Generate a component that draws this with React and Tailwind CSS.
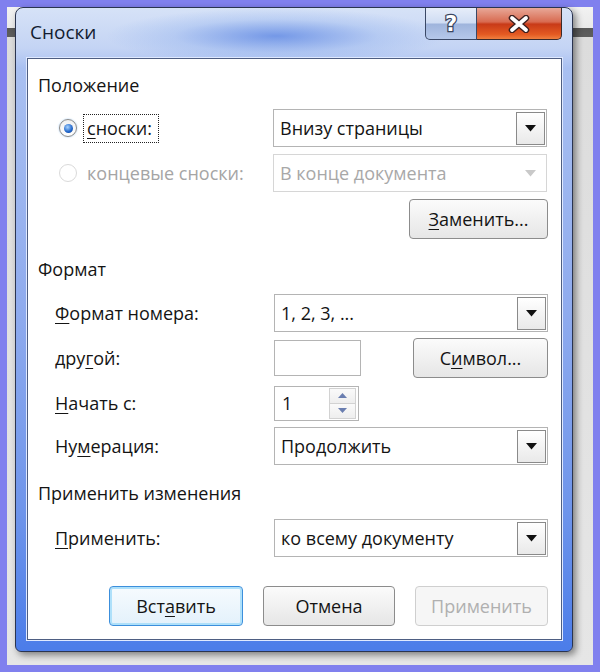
import React from "react";

const U = ({ children }) => (
  <span className="underline decoration-1 underline-offset-[3px]">{children}</span>
);

function Arrow({ disabled }) {
  return (
    <svg width="11" height="7" viewBox="0 0 11 7">
      <path d="M0 0H11L5.5 6.5Z" fill={disabled ? "#c9c9c9" : "#111"} />
    </svg>
  );
}

function Combo({ text, disabled }) {
  return (
    <div
      className={
        disabled
          ? "w-[274px] h-[38px] border border-[#d6d6d6] bg-white flex items-center text-[#a8a8a8]"
          : "w-[274px] h-[38px] border border-[#b4b4b4] bg-white flex items-center text-[#141414]"
      }
    >
      <span className="flex-1 pl-[6px] whitespace-nowrap">{text}</span>
      {disabled ? (
        <div className="w-[29px] h-[33px] mr-[1px] flex items-center justify-center">
          <Arrow disabled />
        </div>
      ) : (
        <div className="w-[29px] h-[33px] mr-[1px] border border-[#8a8a8a] bg-[linear-gradient(to_bottom,#ffffff,#e9e9e9)] flex items-center justify-center">
          <Arrow />
        </div>
      )}
    </div>
  );
}

function Btn({ children, className = "", kind = "normal" }) {
  const k =
    kind === "default"
      ? "border-[#3c8fdc] shadow-[inset_0_0_0_2px_#aee0fa] bg-[linear-gradient(to_bottom,#f6fbfe,#e3f1fb)] text-[#141414]"
      : kind === "disabled"
      ? "border-[#cfcfcf] bg-[#f6f6f6] text-[#b0b0b0]"
      : "border-[#8c8c8c] bg-[linear-gradient(to_bottom,#fbfbfb,#e6e6e6)] text-[#141414]";
  return (
    <div
      className={`h-[40px] rounded-[4px] border flex items-center justify-center ${k} ${className}`}
    >
      {children}
    </div>
  );
}

function Row({ label, children, className = "" }) {
  return (
    <div className={`flex items-center pl-[27px] ${className}`}>
      <div className="w-[219px] whitespace-nowrap text-[#141414]">{label}</div>
      {children}
    </div>
  );
}

export default function App() {
  return (
    <div className="w-[600px] h-[672px] bg-[#8080ee] pt-[7px] px-[7px] pb-[7px] font-['Open_Sans','Noto_Sans',sans-serif] text-[18px] leading-none">
      <div className="w-[586px] h-[658px] pl-[8px] pb-[13px] bg-[linear-gradient(to_bottom,#f2f2f2_0px,#e9e9e9_21px,#585858_21px,#5e5e5e_30px,#dcdcdc_30px,#e6e6e6_100%)]">
        <div className="relative w-[558px] h-[645px] rounded-t-[8px] rounded-b-[6px] border border-[#2a3450] shadow-[3px_3px_7px_rgba(0,0,0,0.45)] bg-[radial-gradient(ellipse_170px_28px_at_260px_28px,rgba(80,125,225,0.7),rgba(120,160,235,0.25)_60%,transparent),linear-gradient(to_bottom,#d6e2f7_0px,#c4d4f4_40px,#a9c0f1_60px,#8fabee_300px,#6f95eb_500px,#4c7de9_640px)] flex flex-col">
          {/* title bar */}
          <div className="h-[50px] flex items-center pl-[14px] pb-[1px]">
            <span className="text-[19px] text-[#121c30]">Сноски</span>
          </div>
          {/* caption buttons */}
          <div className="absolute top-0 right-[10px] flex h-[32px]">
            <div className="w-[52px] h-[32px] border border-[#3a4866] border-t-0 rounded-bl-[5px] bg-[linear-gradient(to_bottom,#e6edf9_0%,#cfdcf3_48%,#9fb4dc_52%,#b5c8ea_100%)] flex items-center justify-center">
              <svg width="20" height="26" viewBox="0 0 20 26">
                <text
                  x="10"
                  y="20"
                  textAnchor="middle"
                  fontSize="21"
                  fontWeight="bold"
                  fontFamily="DejaVu Sans, sans-serif"
                  fill="#ffffff"
                  stroke="#3a4560"
                  strokeWidth="2.5"
                  paintOrder="stroke"
                >
                  ?
                </text>
              </svg>
            </div>
            <div className="w-[85px] h-[32px] border border-[#3a2a2a] border-t-0 border-l-0 rounded-br-[5px] bg-[linear-gradient(to_bottom,#e8a898_0%,#d86a50_45%,#c83a18_52%,#e45a22_85%,#f08040_100%)] flex items-center justify-center">
              <svg width="24" height="18" viewBox="0 0 24 18">
                <path d="M5 3L19 15M19 3L5 15" stroke="#3b2020" strokeWidth="6.5" strokeLinecap="round" />
                <path d="M5 3L19 15M19 3L5 15" stroke="#ffffff" strokeWidth="3.8" strokeLinecap="round" />
              </svg>
            </div>
          </div>

          {/* content panel */}
          <div className="ml-[11px] mr-[10px] h-[582px] bg-white border border-[#4e5e82] shadow-[0_0_0_1px_#dfe9ff] flex flex-col">
            <div className="mt-[14px] h-[24px] flex items-center pl-[10px] text-[#141414]">Положение</div>

            {/* radio row 1 */}
            <div className="mt-[12px] h-[38px] flex items-center">
              <div className="ml-[31px] w-[18px] h-[18px] rounded-full border border-[#8a8a8a] bg-[linear-gradient(to_bottom,#f0f0f0,#ffffff)] flex items-center justify-center shadow-[0_0_2px_#9ac6f0]">
                <div className="w-[9px] h-[9px] rounded-full bg-[radial-gradient(circle_at_40%_35%,#a8d4ff,#1e63c8_60%,#0c3c90)]" />
              </div>
              <div className="ml-[6px] w-[76px] h-[29px] border border-dotted border-[#222] flex items-center pl-[3px] text-[#141414] whitespace-nowrap">
                <U>с</U>носки:
              </div>
              <div className="ml-[114px]">
                <Combo text="Внизу страницы" />
              </div>
            </div>

            {/* radio row 2 */}
            <div className="mt-[7px] h-[38px] flex items-center">
              <div className="ml-[31px] w-[18px] h-[18px] rounded-full border border-[#dadada] bg-white" />
              <div className="ml-[10px] w-[186px] text-[#a5a5a5] whitespace-nowrap">концевые сноски:</div>
              <div>
                <Combo text="В конце документа" disabled />
              </div>
            </div>

            <div className="mt-[7px] flex justify-end pr-[13px]">
              <Btn className="w-[139px] h-[39px]">
                <span>
                  <U>З</U>аменить...
                </span>
              </Btn>
            </div>

            <div className="mt-[18px] h-[24px] flex items-center pl-[10px] text-[#141414]">Формат</div>

            <Row className="mt-[13px] h-[38px]" label={<><U>Ф</U>ормат номера:</>}>
              <Combo text="1, 2, 3, ..." />
            </Row>

            <Row className="mt-[6px] h-[40px]" label={<>дру<U>г</U>ой:</>}>
              <div className="w-[87px] h-[36px] border border-[#b4b4b4] bg-white" />
              <Btn className="ml-[52px] w-[135px]">
                <span>
                  С<U>и</U>мвол...
                </span>
              </Btn>
            </Row>

            <Row className="mt-[7px] h-[36px]" label={<><U>Н</U>ачать с:</>}>
              <div className="w-[85px] h-[35px] border border-[#b4b4b4] bg-white flex items-center">
                <span className="flex-1 pl-[7px] text-[#141414]">1</span>
                <div className="w-[27px] h-[31px] mr-[2px] flex flex-col border border-[#d2d2d2]">
                  <div className="flex-1 flex items-center justify-center border-b border-[#d2d2d2] bg-[linear-gradient(to_bottom,#fafafa,#eeeeee)]">
                    <svg width="9" height="5" viewBox="0 0 9 5"><path d="M0 5L4.5 0L9 5Z" fill="#6a7eb0" /></svg>
                  </div>
                  <div className="flex-1 flex items-center justify-center bg-[linear-gradient(to_bottom,#fafafa,#eeeeee)]">
                    <svg width="9" height="5" viewBox="0 0 9 5"><path d="M0 0L9 0L4.5 5Z" fill="#6a7eb0" /></svg>
                  </div>
                </div>
              </div>
            </Row>

            <Row className="mt-[6px] h-[38px]" label={<>Ну<U>м</U>ерация:</>}>
              <Combo text="Продолжить" />
            </Row>

            <div className="mt-[16px] h-[24px] flex items-center pl-[10px] text-[#141414]">Применить изменения</div>

            <Row className="mt-[14px] h-[38px]" label={<><U>П</U>рименить:</>}>
              <Combo text="ко всему документу" />
            </Row>

            <div className="mt-[29px] flex justify-end pr-[13px] gap-[20px]">
              <Btn kind="default" className="w-[134px]">
                <span>
                  Вст<U>а</U>вить
                </span>
              </Btn>
              <Btn className="w-[132px]">Отмена</Btn>
              <Btn kind="disabled" className="w-[133px]">Применить</Btn>
            </div>
          </div>
        </div>
      </div>
    </div>
  );
}
